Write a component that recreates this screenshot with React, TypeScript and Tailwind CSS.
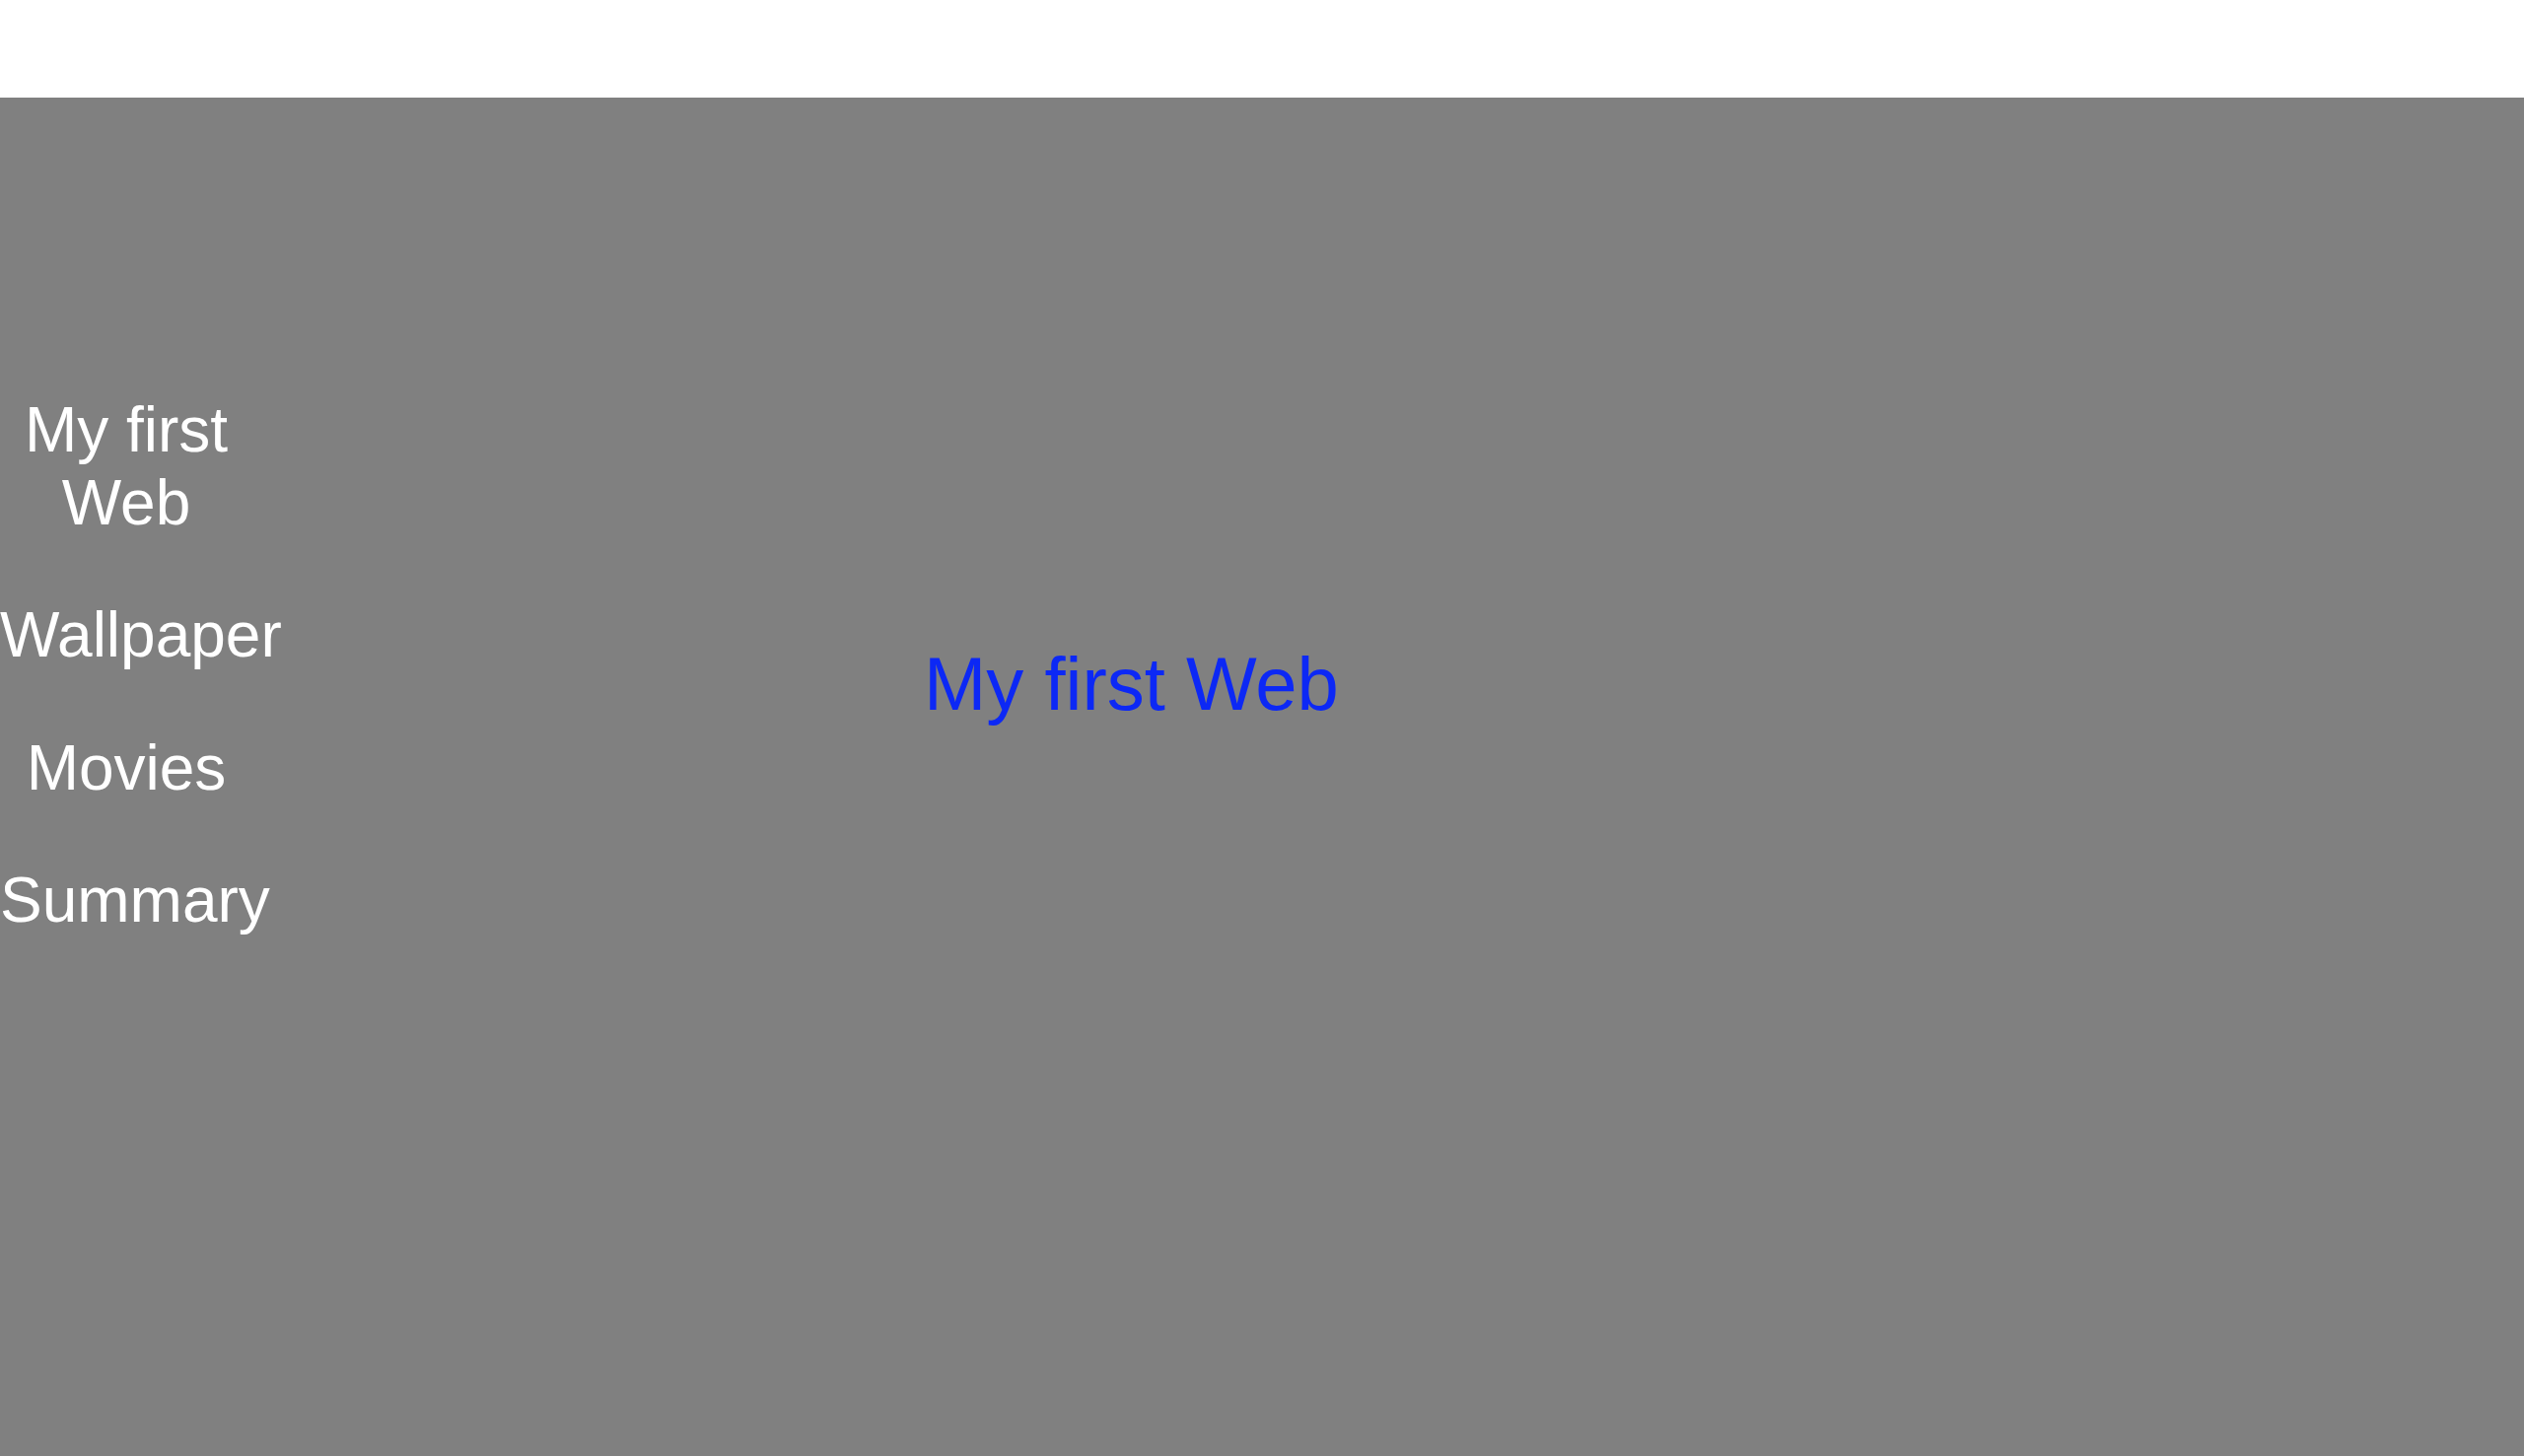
import React from "react";

export default function App() {
  const items = ["My first Web", "Wallpaper", "Movies", "Summary"];
  return (
    <div
      className="w-[2560px] h-[1477px] flex flex-col bg-white overflow-hidden"
      style={{ fontFamily: '"Liberation Sans", Arial, sans-serif' }}
    >
      <div className="h-[99px] shrink-0 bg-white" />
      <div className="flex-1 flex bg-[#808080]">
        <nav className="w-[256px] shrink-0 pt-[301px] flex flex-col gap-[61px] text-center text-white text-[64px] leading-[1.15]">
          {items.map((t) => (
            <a key={t} className="block">
              {t}
            </a>
          ))}
        </nav>
        <main className="flex-1 pl-[681px] pt-[551px]">
          <h1 className="text-[76px] leading-[1.15] font-normal text-[#0c28f5]">
            My first Web
          </h1>
        </main>
      </div>
    </div>
  );
}
